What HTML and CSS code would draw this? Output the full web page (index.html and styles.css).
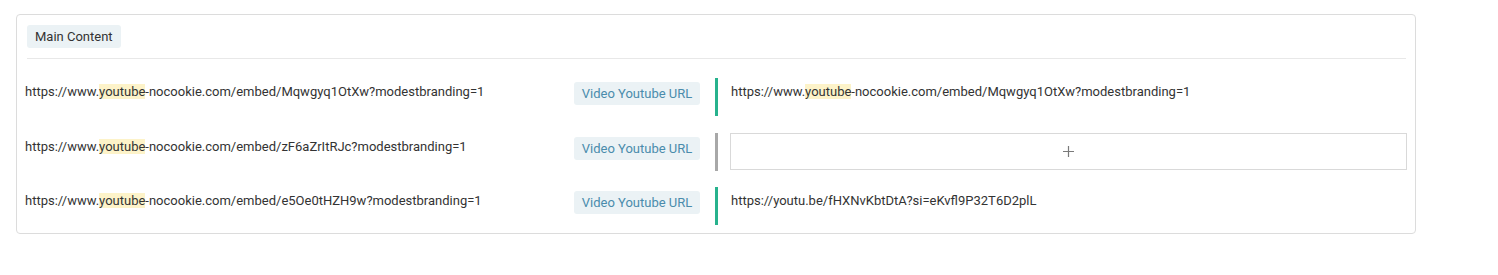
FILE: index.html
```html
<!DOCTYPE html>
<html>
<head>
<meta charset="utf-8">
<link rel="stylesheet" href="styles.css">
</head>
<body>
<div class="card">
  <div class="card-head">
    <span class="chip">Main Content</span>
  </div>
  <div class="rows">
    <div class="row">
      <div class="source">https://www.<mark>youtube</mark>-nocookie.com/embed/Mqwgyq1OtXw?modestbranding=1</div>
      <span class="field">Video Youtube URL</span>
      <span class="bar ok"></span>
      <div class="value">https://www.<mark>youtube</mark>-nocookie.com/embed/Mqwgyq1OtXw?modestbranding=1</div>
    </div>
    <div class="row">
      <div class="source">https://www.<mark>youtube</mark>-nocookie.com/embed/zF6aZrItRJc?modestbranding=1</div>
      <span class="field">Video Youtube URL</span>
      <span class="bar empty"></span>
      <div class="value value-box">
        <div class="add">
          <svg width="11" height="11" viewBox="0 0 11 11"><path d="M5.5 0v11M0 5.5h11" stroke="#7a7a7a" stroke-width="1.2" fill="none"/></svg>
        </div>
      </div>
    </div>
    <div class="row">
      <div class="source">https://www.<mark>youtube</mark>-nocookie.com/embed/e5Oe0tHZH9w?modestbranding=1</div>
      <span class="field">Video Youtube URL</span>
      <span class="bar ok"></span>
      <div class="value">https://youtu.be/fHXNvKbtDtA?si=eKvfl9P32T6D2plL</div>
    </div>
  </div>
</div>
</body>
</html>
```

FILE: styles.css
```css
html, body {
  margin: 0;
  padding: 0;
  background: #fff;
}
body {
  padding: 14px 0 0 16px;
  font-family: Roboto, "Liberation Sans", sans-serif;
  font-size: 13px;
  color: #333;
}
.card {
  width: 1400px;
  box-sizing: border-box;
  border: 1px solid #dcdcdc;
  border-radius: 4px;
  background: #fff;
}
.card-head {
  margin: 0 9px 0 10px;
  padding: 10px 0 10px;
  border-bottom: 1px solid #e8e8e8;
  display: flex;
}
.chip {
  display: inline-block;
  height: 23px;
  line-height: 23px;
  padding: 0 8px;
  background: #ebf2f5;
  border-radius: 3px;
  color: #333;
}
.rows {
  padding-top: 10px;
}
.row {
  display: flex;
  align-items: flex-start;
  padding: 9px 8px 8px;
}
.row:last-child {
  padding-top: 8px;
}
.source {
  width: 549px;
  flex: none;
  padding-top: 4px;
  line-height: 20px;
  white-space: nowrap;
}
mark {
  background: #fdf3c9;
  color: inherit;
}
.field {
  flex: none;
  width: 126px;
  height: 23px;
  line-height: 24px;
  margin-top: 4px;
  text-align: center;
  background: #ebf2f5;
  border-radius: 3px;
  color: #4a8cac;
}
.bar {
  flex: none;
  width: 3px;
  height: 38px;
  margin-left: 15px;
  margin-right: 13px;
}
.bar.ok {
  background: #27b28d;
}
.bar.empty {
  background: #a8a8a8;
}
.value {
  flex: 1;
  padding-top: 4px;
  line-height: 20px;
  white-space: nowrap;
}
.value-box {
  padding-top: 0;
}
.add {
  height: 35px;
  border: 1px solid #d9d9d9;
  margin-left: -1px;
  display: flex;
  align-items: center;
  justify-content: center;
}
.add svg {
  display: block;
}
```
